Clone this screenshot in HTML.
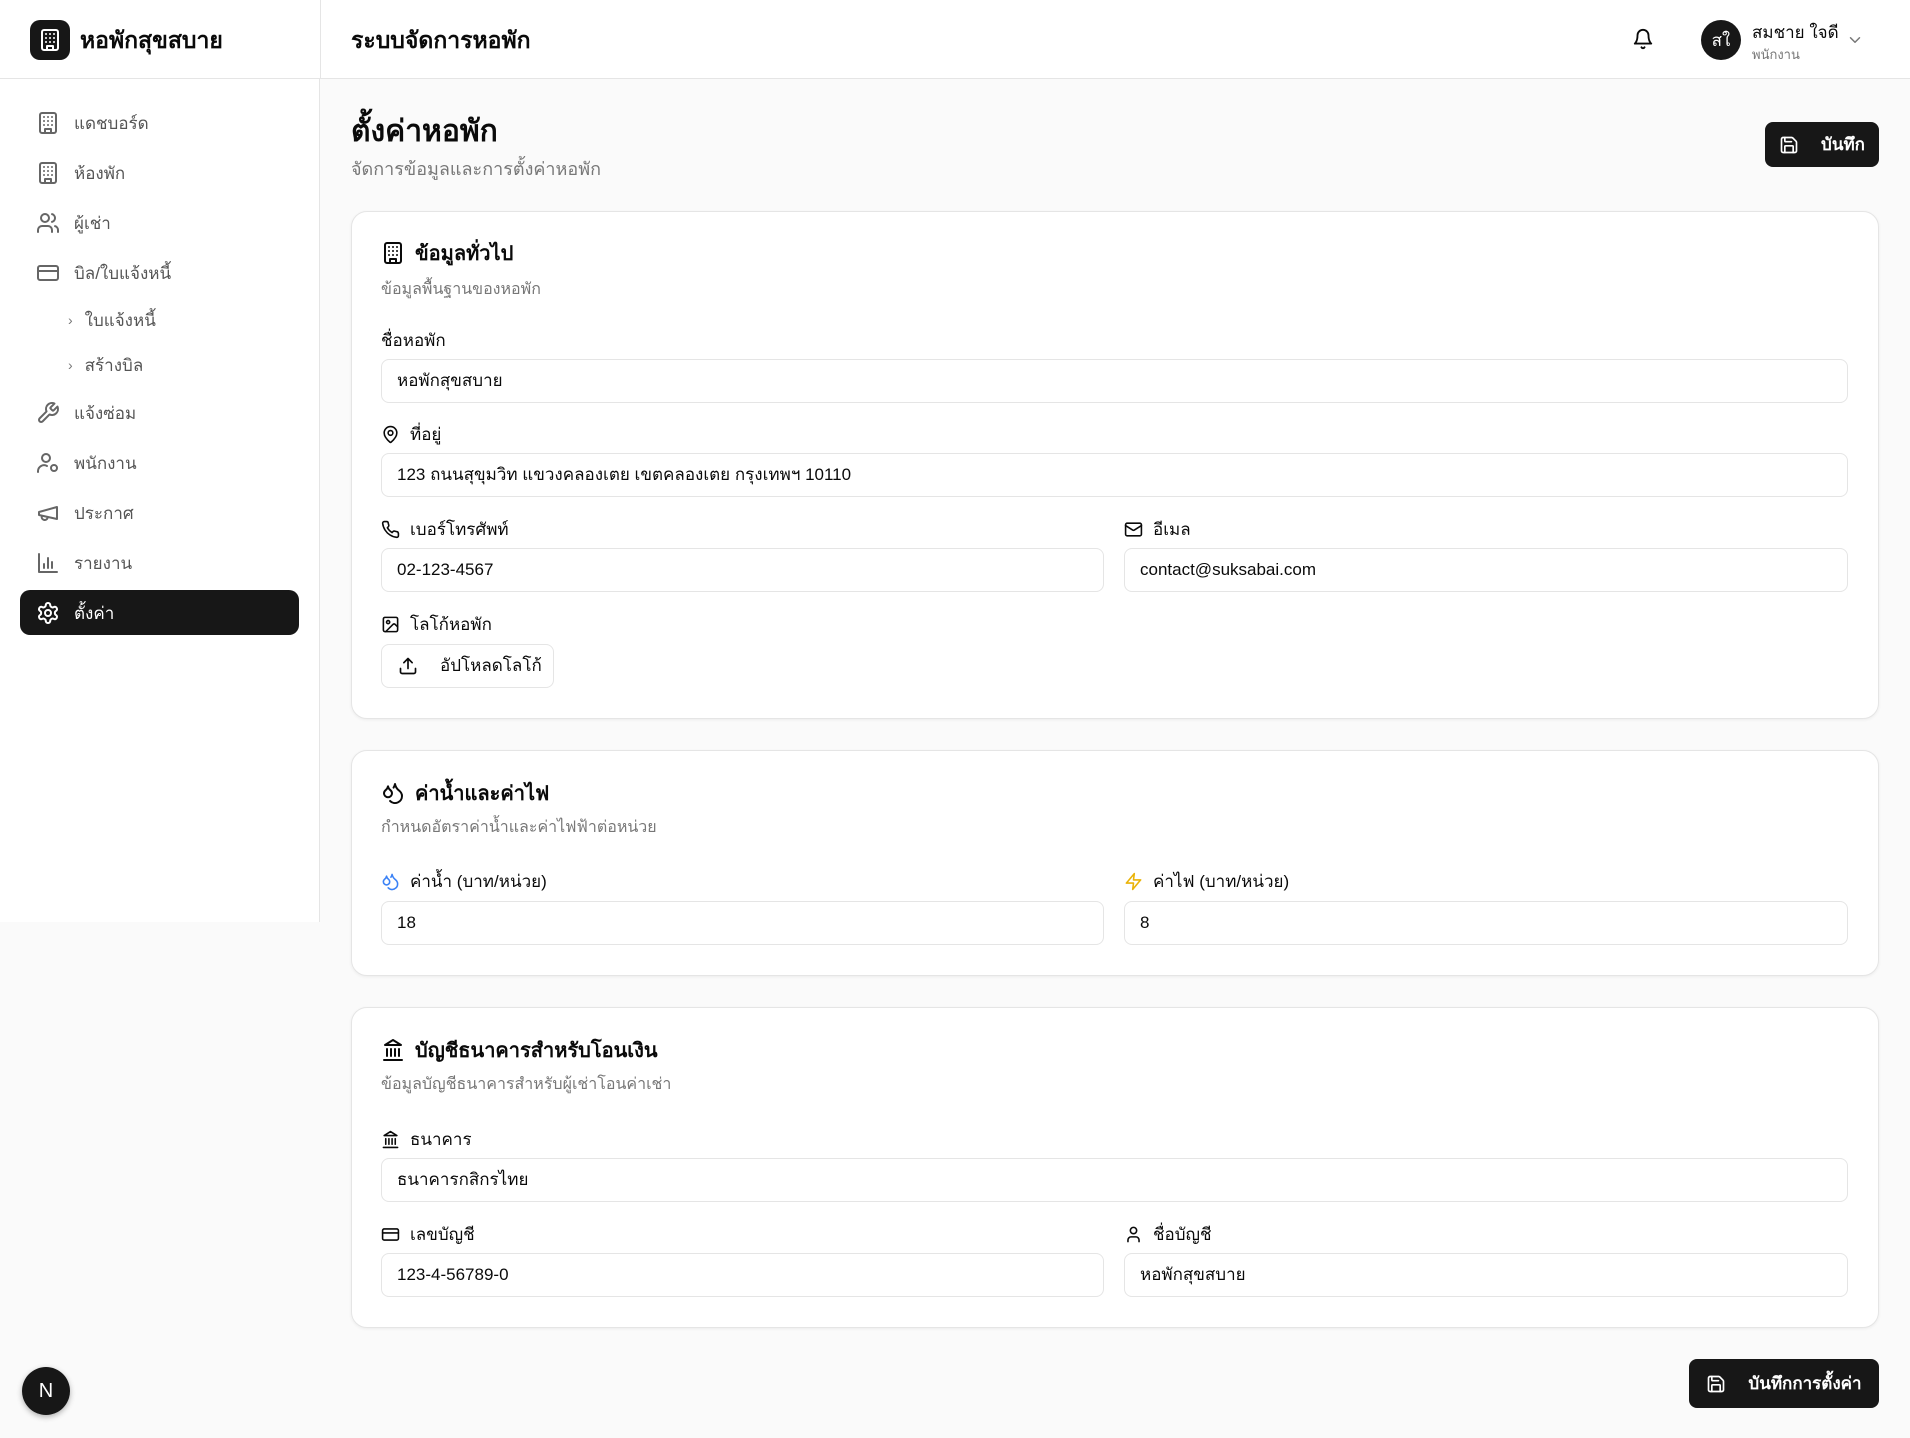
<!DOCTYPE html>
<html><head><meta charset="utf-8"><style>
*{box-sizing:border-box;margin:0;padding:0}
body{width:1910px;height:1438px;background:#fafafa;font-family:"Liberation Sans","Noto Sans CJK SC",sans-serif;color:#0a0a0a;position:relative;overflow:hidden}
.a{position:absolute}
svg{fill:none;stroke:currentColor;stroke-width:2;stroke-linecap:round;stroke-linejoin:round}
.hdr{left:0;top:0;width:1910px;height:79px;background:#fff;border-bottom:1px solid #e5e5e5}
.side{left:0;top:79px;width:320px;height:843px;background:#fff;border-right:1px solid #e5e5e5}
.vline{left:320px;top:0;width:1px;height:79px;background:#e5e5e5}
.nav{left:36px;font-size:17px;color:#555;display:flex;align-items:center;gap:14px;height:30px}
.nav svg{width:24px;height:24px;color:#666}
.sub{left:68px;font-size:17px;color:#555;display:flex;align-items:center;gap:12px;height:30px}
.card{left:351px;width:1528px;background:#fff;border:1px solid #e5e5e5;border-radius:16px;box-shadow:0 1px 3px rgba(0,0,0,.06)}
.ct{left:381px;font-size:20px;font-weight:bold;display:flex;align-items:center;gap:10px;height:30px}
.ct svg{width:24px;height:24px}
.cs{left:381px;font-size:16px;color:#777;height:24px;line-height:24px}
.lb{font-size:17px;font-weight:500;display:flex;align-items:center;gap:10px;height:26px}
.lb svg{width:19px;height:19px}
.in{height:44px;border:1px solid #e5e5e5;border-radius:8px;background:#fff;font-size:17px;line-height:42px;padding-left:15px}
.btn{background:#171717;color:#fff;border-radius:8px;font-size:17px;font-weight:bold;display:flex;align-items:center;justify-content:center;gap:26px}
.btn svg{width:20px;height:20px}
</style></head><body>
<div class="a hdr"></div>
<div class="a vline"></div>
<div class="a" style="left:30px;top:20px;width:40px;height:40px;background:#171717;border-radius:10px;color:#fff;display:flex;align-items:center;justify-content:center"><svg width="24" height="24" viewBox="0 0 24 24"><rect x="4" y="2" width="16" height="20" rx="2"/><path d="M9 22v-4h6v4M8 6h.01M16 6h.01M12 6h.01M12 10h.01M12 14h.01M16 10h.01M16 14h.01M8 10h.01M8 14h.01"/></svg></div>
<div class="a" style="left:80px;top:24px;font-size:23px;font-weight:bold;line-height:32px">หอพักสุขสบาย</div>
<div class="a" style="left:351px;top:24px;font-size:23px;font-weight:bold;line-height:32px">ระบบจัดการหอพัก</div>
<svg class="a" style="left:1632px;top:28px;width:22px;height:22px" viewBox="0 0 24 24"><path d="M6 8a6 6 0 0 1 12 0c0 7 3 9 3 9H3s3-2 3-9M10.3 21a1.94 1.94 0 0 0 3.4 0"/></svg>
<div class="a" style="left:1701px;top:20px;width:40px;height:40px;border-radius:50%;background:#171717;color:#fff;font-size:17px;display:flex;align-items:center;justify-content:center">สใ</div>
<div class="a" style="left:1752px;top:19px;font-size:17px;font-weight:500">สมชาย ใจดี</div>
<div class="a" style="left:1752px;top:44px;font-size:13px;color:#777">พนักงาน</div>
<svg class="a" style="left:1846px;top:31px;width:18px;height:18px;color:#777" viewBox="0 0 24 24"><path d="m6 9 6 6 6-6"/></svg>

<div class="a side"></div>
<div class="a nav" style="top:108px"><svg viewBox="0 0 24 24"><rect x="4" y="2" width="16" height="20" rx="2"/><path d="M9 22v-4h6v4M8 6h.01M16 6h.01M12 6h.01M12 10h.01M12 14h.01M16 10h.01M16 14h.01M8 10h.01M8 14h.01"/></svg>แดชบอร์ด</div>
<div class="a nav" style="top:158px"><svg viewBox="0 0 24 24"><rect x="4" y="2" width="16" height="20" rx="2"/><path d="M9 22v-4h6v4M8 6h.01M16 6h.01M12 6h.01M12 10h.01M12 14h.01M16 10h.01M16 14h.01M8 10h.01M8 14h.01"/></svg>ห้องพัก</div>
<div class="a nav" style="top:208px"><svg viewBox="0 0 24 24"><path d="M16 21v-2a4 4 0 0 0-4-4H6a4 4 0 0 0-4 4v2"/><circle cx="9" cy="7" r="4"/><path d="M22 21v-2a4 4 0 0 0-3-3.87M16 3.13a4 4 0 0 1 0 7.75"/></svg>ผู้เช่า</div>
<div class="a nav" style="top:258px"><svg viewBox="0 0 24 24"><rect x="2" y="5" width="20" height="14" rx="2"/><path d="M2 10h20"/></svg>บิล/ใบแจ้งหนี้</div>
<div class="a sub" style="top:305px"><span style="color:#777;font-size:14px">›</span>ใบแจ้งหนี้</div>
<div class="a sub" style="top:350px"><span style="color:#777;font-size:14px">›</span>สร้างบิล</div>
<div class="a nav" style="top:398px"><svg viewBox="0 0 24 24"><path d="M14.7 6.3a1 1 0 0 0 0 1.4l1.6 1.6a1 1 0 0 0 1.4 0l3.77-3.77a6 6 0 0 1-7.94 7.94l-6.91 6.91a2.12 2.12 0 0 1-3-3l6.91-6.91a6 6 0 0 1 7.94-7.94l-3.76 3.76z"/></svg>แจ้งซ่อม</div>
<div class="a nav" style="top:448px"><svg viewBox="0 0 24 24"><circle cx="10" cy="7" r="4"/><path d="M2 21v-1a6 6 0 0 1 9-5"/><circle cx="18" cy="17" r="3"/></svg>พนักงาน</div>
<div class="a nav" style="top:498px"><svg viewBox="0 0 24 24"><path d="m3 11 18-5v12L3 14v-3zM11.6 16.8a3 3 0 1 1-5.8-1.6"/></svg>ประกาศ</div>
<div class="a nav" style="top:548px"><svg viewBox="0 0 24 24"><path d="M3 3v18h18M8 17v-4M12 17V7M16 17v-6"/></svg>รายงาน</div>
<div class="a" style="left:20px;top:590px;width:279px;height:45px;background:#171717;border-radius:10px"></div>
<div class="a nav" style="top:598px;color:#fff;font-weight:500"><svg viewBox="0 0 24 24" style="color:#fff"><path d="M12.22 2h-.44a2 2 0 0 0-2 2v.18a2 2 0 0 1-1 1.73l-.43.25a2 2 0 0 1-2 0l-.15-.08a2 2 0 0 0-2.73.73l-.22.38a2 2 0 0 0 .73 2.73l.15.1a2 2 0 0 1 1 1.72v.51a2 2 0 0 1-1 1.74l-.15.09a2 2 0 0 0-.73 2.73l.22.38a2 2 0 0 0 2.73.73l.15-.08a2 2 0 0 1 2 0l.43.25a2 2 0 0 1 1 1.73V20a2 2 0 0 0 2 2h.44a2 2 0 0 0 2-2v-.18a2 2 0 0 1 1-1.73l.43-.25a2 2 0 0 1 2 0l.15.08a2 2 0 0 0 2.73-.73l.22-.39a2 2 0 0 0-.73-2.73l-.15-.08a2 2 0 0 1-1-1.74v-.5a2 2 0 0 1 1-1.74l.15-.09a2 2 0 0 0 .73-2.73l-.22-.38a2 2 0 0 0-2.73-.73l-.15.08a2 2 0 0 1-2 0l-.43-.25a2 2 0 0 1-1-1.73V4a2 2 0 0 0-2-2z"/><circle cx="12" cy="12" r="3"/></svg>ตั้งค่า</div>

<div class="a" style="left:351px;top:112px;font-size:30px;font-weight:bold;line-height:40px">ตั้งค่าหอพัก</div>
<div class="a" style="left:351px;top:154px;font-size:18px;color:#777">จัดการข้อมูลและการตั้งค่าหอพัก</div>
<div class="a btn" style="left:1765px;top:122px;width:114px;height:45px;gap:22px"><svg viewBox="0 0 24 24"><path d="M15.2 3a2 2 0 0 1 1.4.6l3.8 3.8a2 2 0 0 1 .6 1.4V19a2 2 0 0 1-2 2H5a2 2 0 0 1-2-2V5a2 2 0 0 1 2-2z"/><path d="M17 21v-7a1 1 0 0 0-1-1H8a1 1 0 0 0-1 1v7M7 3v4a1 1 0 0 0 1 1h7"/></svg>บันทึก</div>

<!-- card 1 -->
<div class="a card" style="top:211px;height:508px"></div>
<div class="a ct" style="top:238px"><svg viewBox="0 0 24 24"><rect x="4" y="2" width="16" height="20" rx="2"/><path d="M9 22v-4h6v4M8 6h.01M16 6h.01M12 6h.01M12 10h.01M12 14h.01M16 10h.01M16 14h.01M8 10h.01M8 14h.01"/></svg>ข้อมูลทั่วไป</div>
<div class="a cs" style="top:278px">ข้อมูลพื้นฐานของหอพัก</div>
<div class="a lb" style="left:381px;top:327px">ชื่อหอพัก</div>
<div class="a in" style="left:381px;top:359px;width:1467px">หอพักสุขสบาย</div>
<div class="a lb" style="left:381px;top:421px"><svg viewBox="0 0 24 24"><path d="M20 10c0 5-5.5 10.2-7.4 11.8a1 1 0 0 1-1.2 0C9.5 20.2 4 15 4 10a8 8 0 0 1 16 0"/><circle cx="12" cy="10" r="3"/></svg>ที่อยู่</div>
<div class="a in" style="left:381px;top:453px;width:1467px">123 ถนนสุขุมวิท แขวงคลองเตย เขตคลองเตย กรุงเทพฯ 10110</div>
<div class="a lb" style="left:381px;top:516px"><svg viewBox="0 0 24 24"><path d="M22 16.9v3a2 2 0 0 1-2.2 2 19.8 19.8 0 0 1-8.6-3.1 19.5 19.5 0 0 1-6-6A19.8 19.8 0 0 1 2.1 4.2 2 2 0 0 1 4.1 2h3a2 2 0 0 1 2 1.7c.1.9.4 1.8.7 2.7a2 2 0 0 1-.5 2.1L8 9.8a16 16 0 0 0 6 6l1.3-1.3a2 2 0 0 1 2.1-.4c.9.3 1.8.6 2.7.7a2 2 0 0 1 1.7 2z"/></svg>เบอร์โทรศัพท์</div>
<div class="a in" style="left:381px;top:548px;width:723px">02-123-4567</div>
<div class="a lb" style="left:1124px;top:516px"><svg viewBox="0 0 24 24"><rect x="2" y="4" width="20" height="16" rx="2"/><path d="m22 7-8.97 5.7a1.94 1.94 0 0 1-2.06 0L2 7"/></svg>อีเมล</div>
<div class="a in" style="left:1124px;top:548px;width:724px">contact@suksabai.com</div>
<div class="a lb" style="left:381px;top:611px"><svg viewBox="0 0 24 24"><rect x="3" y="3" width="18" height="18" rx="2"/><circle cx="9" cy="9" r="2"/><path d="m21 15-3.1-3.1a2 2 0 0 0-2.8 0L6 21"/></svg>โลโก้หอพัก</div>
<div class="a in" style="left:381px;top:644px;width:173px;display:flex;align-items:center;gap:22px;padding-left:16px;font-weight:500"><svg viewBox="0 0 24 24" style="width:20px;height:20px"><path d="M21 15v4a2 2 0 0 1-2 2H5a2 2 0 0 1-2-2v-4M17 8l-5-5-5 5M12 3v12"/></svg>อัปโหลดโลโก้</div>

<!-- card 2 -->
<div class="a card" style="top:750px;height:226px"></div>
<div class="a ct" style="top:778px"><svg viewBox="0 0 24 24"><path d="M7 16.3c2.2 0 4-1.83 4-4.05 0-1.16-.57-2.26-1.71-3.19S7.29 6.75 7 5.3c-.29 1.45-1.14 2.84-2.29 3.76S3 11.1 3 12.25c0 2.22 1.8 4.05 4 4.05zM12.56 6.6A10.97 10.97 0 0 0 14 3.02c.5 2.5 2 4.9 4 6.5s3 3.5 3 5.5a6.98 6.98 0 0 1-11.91 4.97"/></svg>ค่าน้ำและค่าไฟ</div>
<div class="a cs" style="top:816px">กำหนดอัตราค่าน้ำและค่าไฟฟ้าต่อหน่วย</div>
<div class="a lb" style="left:381px;top:868px"><svg viewBox="0 0 24 24" style="color:#3b82f6"><path d="M7 16.3c2.2 0 4-1.83 4-4.05 0-1.16-.57-2.26-1.71-3.19S7.29 6.75 7 5.3c-.29 1.45-1.14 2.84-2.29 3.76S3 11.1 3 12.25c0 2.22 1.8 4.05 4 4.05zM12.56 6.6A10.97 10.97 0 0 0 14 3.02c.5 2.5 2 4.9 4 6.5s3 3.5 3 5.5a6.98 6.98 0 0 1-11.91 4.97"/></svg>ค่าน้ำ (บาท/หน่วย)</div>
<div class="a in" style="left:381px;top:901px;width:723px">18</div>
<div class="a lb" style="left:1124px;top:868px"><svg viewBox="0 0 24 24" style="color:#eab308"><path d="M13 2 3 14h9l-1 8 10-12h-9l1-8z"/></svg>ค่าไฟ (บาท/หน่วย)</div>
<div class="a in" style="left:1124px;top:901px;width:724px">8</div>

<!-- card 3 -->
<div class="a card" style="top:1007px;height:321px"></div>
<div class="a ct" style="top:1035px"><svg viewBox="0 0 24 24"><path d="M3 22h18M6 18v-7M10 18v-7M14 18v-7M18 18v-7M12 2l8 5H4z"/></svg>บัญชีธนาคารสำหรับโอนเงิน</div>
<div class="a cs" style="top:1073px">ข้อมูลบัญชีธนาคารสำหรับผู้เช่าโอนค่าเช่า</div>
<div class="a lb" style="left:381px;top:1126px"><svg viewBox="0 0 24 24"><path d="M3 22h18M6 18v-7M10 18v-7M14 18v-7M18 18v-7M12 2l8 5H4z"/></svg>ธนาคาร</div>
<div class="a in" style="left:381px;top:1158px;width:1467px">ธนาคารกสิกรไทย</div>
<div class="a lb" style="left:381px;top:1221px"><svg viewBox="0 0 24 24"><rect x="2" y="5" width="20" height="14" rx="2"/><path d="M2 10h20"/></svg>เลขบัญชี</div>
<div class="a in" style="left:381px;top:1253px;width:723px">123-4-56789-0</div>
<div class="a lb" style="left:1124px;top:1221px"><svg viewBox="0 0 24 24"><path d="M19 21v-2a4 4 0 0 0-4-4H9a4 4 0 0 0-4 4v2"/><circle cx="12" cy="7" r="4"/></svg>ชื่อบัญชี</div>
<div class="a in" style="left:1124px;top:1253px;width:724px">หอพักสุขสบาย</div>

<div class="a btn" style="left:1689px;top:1359px;width:190px;height:49px;gap:22px"><svg viewBox="0 0 24 24"><path d="M15.2 3a2 2 0 0 1 1.4.6l3.8 3.8a2 2 0 0 1 .6 1.4V19a2 2 0 0 1-2 2H5a2 2 0 0 1-2-2V5a2 2 0 0 1 2-2z"/><path d="M17 21v-7a1 1 0 0 0-1-1H8a1 1 0 0 0-1 1v7M7 3v4a1 1 0 0 0 1 1h7"/></svg>บันทึกการตั้งค่า</div>

<div class="a" style="left:22px;top:1367px;width:48px;height:48px;border-radius:50%;background:#171717;color:#fff;font-size:20px;display:flex;align-items:center;justify-content:center;box-shadow:0 2px 6px rgba(0,0,0,.3)">N</div>
</body></html>
